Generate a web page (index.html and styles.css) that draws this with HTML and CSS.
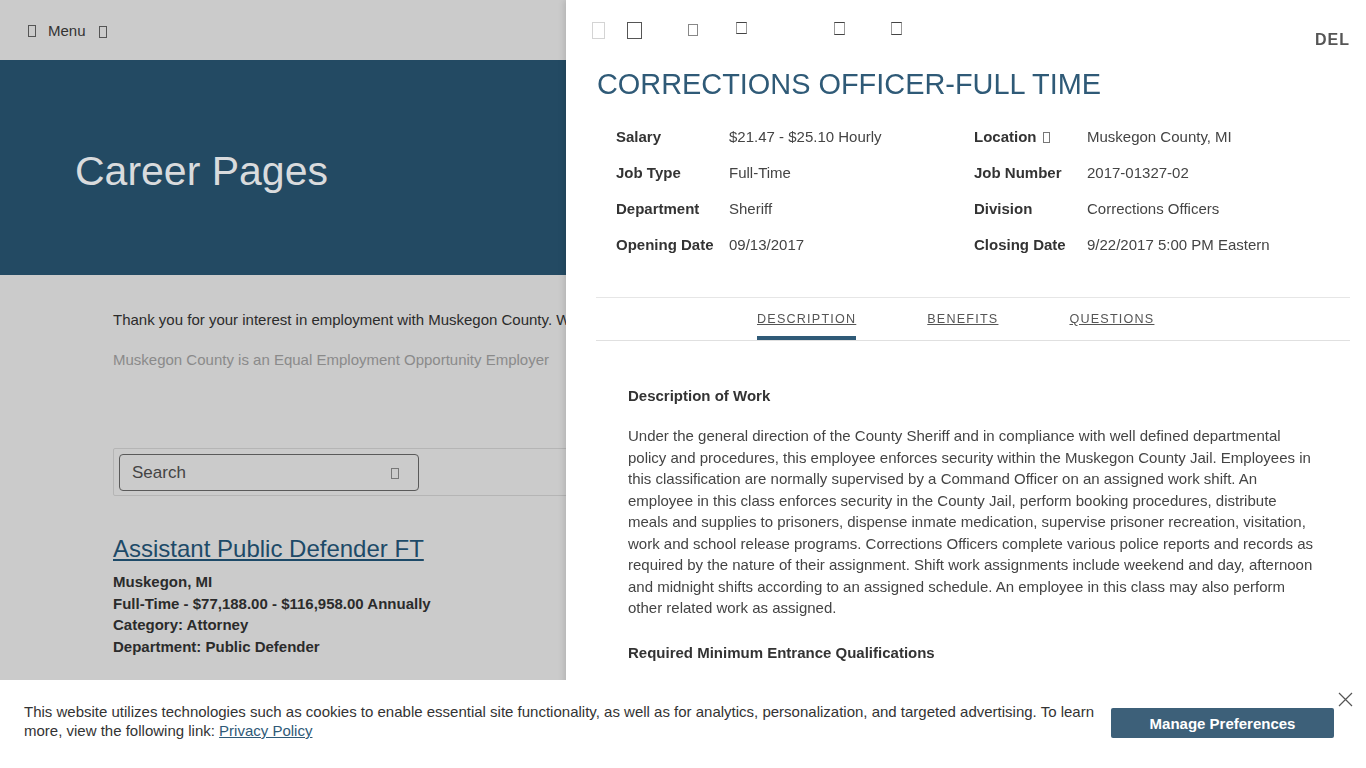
FILE: index.html
```html
<!DOCTYPE html>
<html lang="en">
<head>
<meta charset="utf-8">
<title>Career Pages - Corrections Officer</title>
<link rel="stylesheet" href="styles.css">
</head>
<body>
<div class="site">
  <header class="topbar">
    <span class="tofu tofu-menu"></span>
    <span class="menu-label">Menu</span>
    <span class="tofu tofu-menu2"></span>
  </header>
  <section class="hero">
    <h1 class="hero-title">Career Pages</h1>
  </section>
  <main class="content">
    <p class="intro">Thank you for your interest in employment with Muskegon County. We welcome you.</p>
    <p class="eeo">Muskegon County is an Equal Employment Opportunity Employer</p>
    <div class="search-wrap">
      <div class="search-box">
        <span class="search-text">Search</span>
        <span class="tofu tofu-search"></span>
      </div>
    </div>
    <a class="job-link" href="#">Assistant Public Defender FT</a>
    <div class="job-meta">
      <div>Muskegon, MI</div>
      <div>Full-Time - $77,188.00 - $116,958.00 Annually</div>
      <div>Category: Attorney</div>
      <div>Department: Public Defender</div>
    </div>
  </main>
</div>

<aside class="panel">
  <div class="panel-head">
    <div class="icons">
      <span class="ic ic1"></span>
      <span class="ic ic2"></span>
      <span class="ic ic3"></span>
      <span class="ic ic4"></span>
      <span class="ic ic5"></span>
      <span class="ic ic6"></span>
    </div>
    <span class="del">DEL</span>
  </div>
  <h2 class="job-title">CORRECTIONS OFFICER-FULL TIME</h2>
  <div class="details">
    <div class="lbl">Salary</div><div class="val">$21.47 - $25.10 Hourly</div>
    <div class="lbl">Location <span class="tofu tofu-loc"></span></div><div class="val">Muskegon County, MI</div>
    <div class="lbl">Job Type</div><div class="val">Full-Time</div>
    <div class="lbl">Job Number</div><div class="val">2017-01327-02</div>
    <div class="lbl">Department</div><div class="val">Sheriff</div>
    <div class="lbl">Division</div><div class="val">Corrections Officers</div>
    <div class="lbl">Opening Date</div><div class="val">09/13/2017</div>
    <div class="lbl">Closing Date</div><div class="val">9/22/2017 5:00 PM Eastern</div>
  </div>
  <nav class="tabs">
    <a class="tab active" href="#">DESCRIPTION</a>
    <a class="tab" href="#">BENEFITS</a>
    <a class="tab" href="#">QUESTIONS</a>
  </nav>
  <div class="desc">
    <h3 class="desc-h">Description of Work</h3>
    <p class="desc-p">Under the general direction of the County Sheriff and in compliance with well defined departmental policy and procedures, this employee enforces security within the Muskegon County Jail. Employees in this classification are normally supervised by a Command Officer on an assigned work shift. An employee in this class enforces security in the County Jail, perform booking procedures, distribute meals and supplies to prisoners, dispense inmate medication, supervise prisoner recreation, visitation, work and school release programs. Corrections Officers complete various police reports and records as required by the nature of their assignment. Shift work assignments include weekend and day, afternoon and midnight shifts according to an assigned schedule. An employee in this class may also perform other related work as assigned.</p>
    <h3 class="desc-h desc-h2">Required Minimum Entrance Qualifications</h3>
    <p class="desc-p">Must be at least 18 years of age and possess a high school diploma or GED.</p>
  </div>
</aside>

<div class="cookie">
  <p class="cookie-text">This website utilizes technologies such as cookies to enable essential site functionality, as well as for analytics, personalization, and targeted advertising. To learn more, view the following link: <a href="#">Privacy Policy</a></p>
  <button class="cookie-btn">Manage Preferences</button>
  <span class="cookie-close">
    <svg width="15" height="15" viewBox="0 0 15 15"><path d="M1 1 L14 14 M14 1 L1 14" stroke="#555" stroke-width="1.2" fill="none"/></svg>
  </span>
</div>
</body>
</html>
```

FILE: styles.css
```css
html, body {
  margin: 0;
  padding: 0;
  height: 100%;
  overflow: hidden;
}
body {
  font-family: "Liberation Sans", Arial, sans-serif;
  background: #cbcbcb;
  color: #2b2b2b;
}
.tofu {
  display: inline-block;
  border: 1px solid #555;
  box-sizing: border-box;
}

/* background site (dimmed) */
.site {
  width: 1366px;
}
.topbar {
  height: 60px;
  display: flex;
  align-items: center;
  padding-left: 28px;
  background: #cbcbcb;
}
.tofu-menu { width: 8px; height: 12px; margin-top: 2px; }
.tofu-menu2 { width: 8px; height: 12px; margin-top: 4px; margin-left: 13px; }
.menu-label {
  font-size: 15px;
  color: #333;
  margin-left: 12px;
}
.hero {
  height: 215px;
  background: #234a63;
  box-sizing: border-box;
  padding: 87px 0 0 75px;
}
.hero-title {
  margin: 0;
  font-weight: normal;
  font-size: 41px;
  line-height: 48px;
  color: #d9dbdd;
}
.content {
  padding: 35px 0 0 113px;
}
.intro {
  margin: 0;
  font-size: 15px;
  line-height: 20px;
  color: #2b2b2b;
  white-space: nowrap;
}
.eeo {
  margin: 20px 0 0;
  font-size: 15px;
  line-height: 20px;
  color: #8a8a8a;
}
.search-wrap {
  margin-top: 78px;
  width: 700px;
  height: 48px;
  box-sizing: border-box;
  border: 1px solid #b5b5b5;
  border-radius: 2px;
  padding: 5px;
}
.search-box {
  width: 300px;
  height: 37px;
  box-sizing: border-box;
  border: 1px solid #5a5a5a;
  border-radius: 4px;
  display: flex;
  align-items: center;
  justify-content: space-between;
  padding: 1px 19px 0 12px;
}
.search-text {
  font-size: 17px;
  color: #444;
}
.tofu-search { width: 8px; height: 11px; border-color: #777; }
.job-link {
  display: inline-block;
  margin-top: 39px;
  font-size: 24px;
  line-height: 28px;
  color: #1d4a68;
  text-decoration: underline;
}
.job-meta {
  margin-top: 8px;
  font-size: 15px;
  font-weight: bold;
  line-height: 21.5px;
  color: #2b2b2b;
}

/* slide-over panel */
.panel {
  position: fixed;
  top: 0;
  right: 0;
  width: 800px;
  height: 100%;
  background: #fff;
  box-sizing: border-box;
  padding: 0 16px 0 30px;
  box-shadow: -2px 0 6px rgba(0, 0, 0, 0.12);
}
.panel-head {
  height: 60px;
  display: flex;
  justify-content: space-between;
}
.icons {
  display: flex;
  align-items: flex-start;
  padding-top: 22px;
}
.ic {
  display: inline-block;
  box-sizing: border-box;
  border: 1px solid #666;
}
.ic1 { width: 13px; height: 17px; margin-left: -4px; border-color: #d4d4d4; }
.ic2 { width: 15px; height: 17px; margin-left: 22px; border-color: #555; }
.ic3 { width: 10px; height: 12px; margin-left: 46px; margin-top: 2px; border-color: #888; }
.ic4 { width: 11px; height: 12px; margin-left: 38px; border-color: #999; border-top-color: #444; border-bottom-color: #444; }
.ic5 { width: 11px; height: 13px; margin-left: 87px; border-color: #999; border-top-color: #444; border-bottom-color: #444; }
.ic6 { width: 11px; height: 13px; margin-left: 46px; border-color: #999; border-top-color: #444; border-bottom-color: #444; }
.del {
  align-self: flex-end;
  margin-bottom: 10px;
  font-size: 16px;
  line-height: 20px;
  font-weight: bold;
  letter-spacing: 1px;
  color: #555;
}
.job-title {
  margin: 8px 0 0 1px;
  font-weight: normal;
  font-size: 28.9px;
  line-height: 32px;
  color: #2f5a77;
}
.details {
  margin: 18px 0 0 20px;
  display: grid;
  grid-template-columns: 113px 245px 113px auto;
  grid-auto-rows: 36px;
  align-items: center;
  font-size: 15px;
}
.lbl {
  font-weight: bold;
  color: #333;
  white-space: nowrap;
}
.val {
  color: #444;
}
.tofu-loc { width: 7px; height: 11px; border-color: #777; margin-left: 2px; vertical-align: -1px; }
.tabs {
  margin-top: 35px;
  border-top: 1px solid #e6e6e6;
  border-bottom: 1px solid #e0e0e0;
  display: flex;
  padding-left: 161px;
}
.tab {
  padding: 13px 0 9px;
  font-size: 12.6px;
  line-height: 16px;
  letter-spacing: 1.2px;
  color: #555;
  text-decoration: underline;
  border-bottom: 4px solid transparent;
  margin-right: 71px;
}
.tab.active {
  border-bottom-color: #2f5a77;
}
.desc {
  padding: 45px 0 0 32px;
}
.desc-h {
  margin: 0;
  font-size: 15px;
  line-height: 20px;
  font-weight: bold;
  color: #333;
}
.desc-h2 {
  margin-top: 24px;
}
.desc-p {
  margin: 19px 0 0;
  width: 690px;
  font-size: 15px;
  line-height: 21.5px;
  color: #444;
}

/* cookie banner */
.cookie {
  position: fixed;
  left: 0;
  bottom: 0;
  width: 100%;
  height: 88px;
  background: #fff;
  box-sizing: border-box;
  padding: 22px 0 0 24px;
  display: flex;
  align-items: flex-start;
}
.cookie-text {
  margin: 0;
  width: 1075px;
  font-size: 15px;
  line-height: 19px;
  color: #333;
}
.cookie-text a {
  color: #2f5a77;
  text-decoration: underline;
}
.cookie-btn {
  margin: 6px 0 0 12px;
  width: 223px;
  height: 30px;
  border: none;
  border-radius: 2px;
  background: #3d6079;
  color: #fff;
  font-family: "Liberation Sans", Arial, sans-serif;
  font-size: 15px;
  font-weight: bold;
}
.cookie-close {
  position: absolute;
  top: 12px;
  right: 13px;
  line-height: 0;
}
```
